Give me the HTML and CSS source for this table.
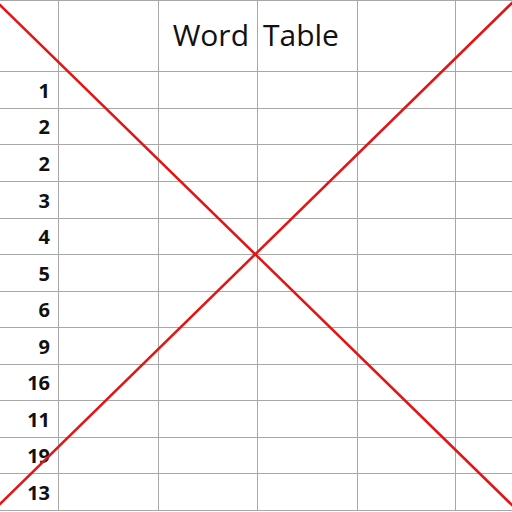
FILE: index.html
```html
<!DOCTYPE html>
<html>
<head>
<meta charset="utf-8">
<link rel="stylesheet" href="styles.css">
</head>
<body>
<div class="sheet">
  <div class="grid">
    <div class="c"></div><div class="c"></div><div class="c title-l">Word</div><div class="c title-r">Table</div><div class="c"></div><div class="c"></div>
    <div class="c num">1</div><div class="c"></div><div class="c"></div><div class="c"></div><div class="c"></div><div class="c"></div>
    <div class="c num">2</div><div class="c"></div><div class="c"></div><div class="c"></div><div class="c"></div><div class="c"></div>
    <div class="c num">2</div><div class="c"></div><div class="c"></div><div class="c"></div><div class="c"></div><div class="c"></div>
    <div class="c num">3</div><div class="c"></div><div class="c"></div><div class="c"></div><div class="c"></div><div class="c"></div>
    <div class="c num">4</div><div class="c"></div><div class="c"></div><div class="c"></div><div class="c"></div><div class="c"></div>
    <div class="c num">5</div><div class="c"></div><div class="c"></div><div class="c"></div><div class="c"></div><div class="c"></div>
    <div class="c num">6</div><div class="c"></div><div class="c"></div><div class="c"></div><div class="c"></div><div class="c"></div>
    <div class="c num">9</div><div class="c"></div><div class="c"></div><div class="c"></div><div class="c"></div><div class="c"></div>
    <div class="c num">16</div><div class="c"></div><div class="c"></div><div class="c"></div><div class="c"></div><div class="c"></div>
    <div class="c num">11</div><div class="c"></div><div class="c"></div><div class="c"></div><div class="c"></div><div class="c"></div>
    <div class="c num">19</div><div class="c"></div><div class="c"></div><div class="c"></div><div class="c"></div><div class="c"></div>
    <div class="c num">13</div><div class="c"></div><div class="c"></div><div class="c"></div><div class="c"></div><div class="c"></div>
  </div>
  <svg class="cross" width="512" height="512" viewBox="0 0 512 512">
    <line x1="-2" y1="3" x2="514" y2="507" />
    <line x1="514" y1="1" x2="-2" y2="506" />
  </svg>
</div>
</body>
</html>
```
FILE: styles.css
```css
html, body {
  margin: 0;
  padding: 0;
  background: #ffffff;
}
.sheet {
  position: relative;
  width: 512px;
  height: 512px;
  overflow: hidden;
  background: #ffffff;
}
.grid {
  display: grid;
  grid-template-columns: 59px 100px 99px 100px 98px 100px;
  grid-template-rows: 71px 37px 36px 37px 37px 36px 37px 36px 37px 36px 37px 36px 37px;
  border-top: 1px solid #a8a8a8;
  width: max-content;
}
.c {
  box-sizing: border-box;
  border-right: 1px solid #a8a8a8;
  border-bottom: 1px solid #a8a8a8;
  display: flex;
  align-items: center;
  font-family: "Open Sans", sans-serif;
  color: #111111;
}
.title-l, .title-r {
  font-size: 30px;
  font-weight: 400;
  padding-bottom: 4px;
}
.title-l {
  justify-content: flex-end;
  padding-right: 8px;
}
.title-r {
  justify-content: flex-start;
  padding-left: 5px;
}
.num {
  justify-content: flex-end;
  padding-right: 8px;
  font-size: 20px;
  font-weight: 700;
}
.cross {
  position: absolute;
  left: 0;
  top: 0;
}
.cross line {
  stroke: #e21414;
  stroke-width: 2.6;
}
```
